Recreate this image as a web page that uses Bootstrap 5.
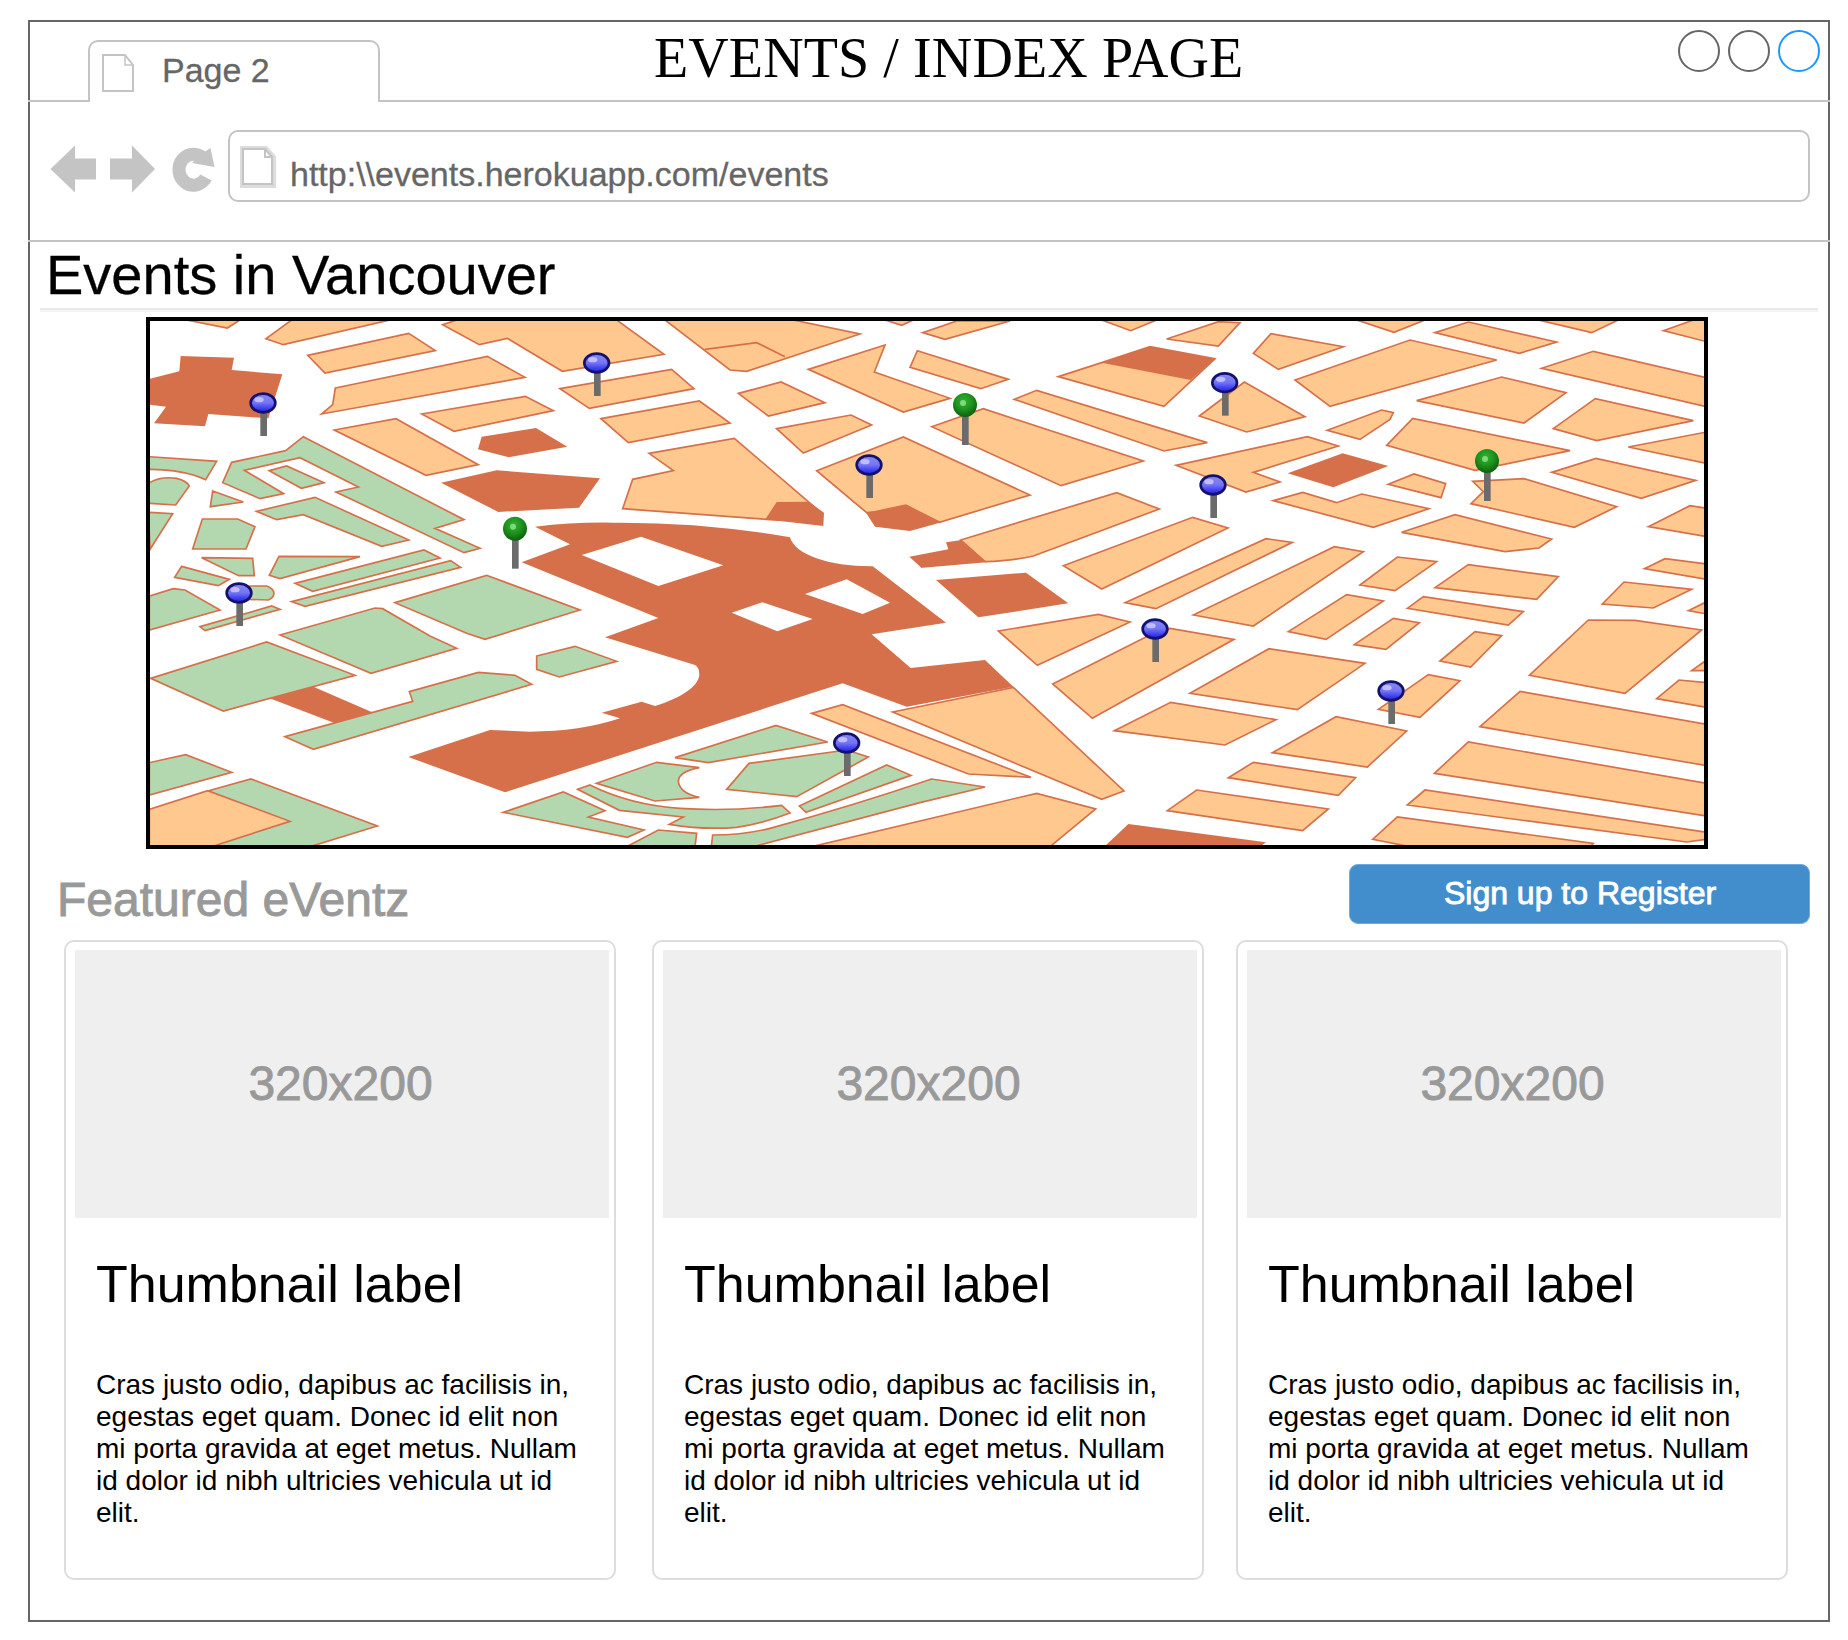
<!DOCTYPE html>
<html lang="en">
<head>
<meta charset="utf-8">
<meta name="viewport" content="width=device-width, initial-scale=1">
<title>Events / Index Page</title>
<link href="https://cdn.jsdelivr.net/npm/bootstrap@5.3.0/dist/css/bootstrap.min.css" rel="stylesheet">
<style>
body{font-family:"Liberation Sans",Arial,sans-serif;color:#000;background:#fff}
.browser-frame{width:1802px;height:1602px;margin:20px 0 0 28px;border:2px solid #666}
.tab-strip{height:80px;margin:0 -2px;border-bottom:2px solid #c4c4c4}
.page-tab{width:292px;height:62px;margin-left:60px;margin-bottom:-2px;border:2px solid #c4c4c4;border-bottom:0;border-radius:10px 10px 0 0;background:#fff;padding:12px 0 0 12px;font-size:34px;line-height:34px;color:#666;-webkit-text-stroke:.3px #666}
.page-tab span{margin:-1px 0 0 28px}
.page-title{font-family:"Liberation Serif","Times New Roman",serif;font-size:56px;line-height:64px;letter-spacing:.1px;margin:4px 0 0 274px;white-space:nowrap}
.window-dots{margin:8px 10px 0 0;gap:8px}
.window-dots i{width:42px;height:42px;border:2px solid #666;border-radius:50%}
.window-dots i:last-child{border-color:#1e96ff}
.tool-strip{height:140px;margin:0 -2px;border-bottom:2px solid #c4c4c4;padding:28px 20px 0 20px}
.address-bar{width:1582px;height:72px;border:2px solid #c4c4c4;border-radius:10px;padding:14px 0 0 10px;font-size:34px;line-height:40px;color:#666;-webkit-text-stroke:.3px #666}
.address-bar span{margin:8px 0 0 14px}
.city-heading{font-size:56px;line-height:66px;margin:0;padding-left:16px;font-weight:400;-webkit-text-stroke:.3px #000}
.heading-rule{height:4px;margin:0 10px;border-top:2px solid #e8e8e8;background:#f4f4f4}
.city-map{width:1562px;height:532px;margin:5px 0 0 116px;border:4px solid #000}
.city-map svg{display:block}
.featured-row{height:60px;margin:15px 18px 0 27px}
.featured-title{font-size:48px;line-height:48px;margin:12px 0 0;font-weight:400;color:#999;-webkit-text-stroke:.9px #999}
.btn-register{width:461px;height:60px;font-size:32px;line-height:54px;padding:0 0 2px 1px;color:#fff;background:#428ecd;border:1px solid #6faade;border-radius:9px;-webkit-text-stroke:.9px #fff}
.thumb-row{margin:16px 0 0 34px}
.thumb-card{width:552px;height:640px;border:2px solid #ddd;border-radius:10px;padding:8px 5px 0 9px}
.thumb-image{height:268px;padding-right:3px;background:#efefef;color:#999;font-size:48px;-webkit-text-stroke:.9px #999}
.thumb-label{font-size:52px;line-height:60px;font-weight:400;margin:36px 0 0 21px}
.thumb-text{font-size:28px;line-height:32px;margin:55px 0 0 21px;white-space:nowrap}
.o{fill:#ffc88f;stroke:#d6704a;stroke-width:5}
.g{fill:#b3d8b0;stroke:#d6704a;stroke-width:5}
.r{fill:#d6704a}
</style>
<script src="https://cdn.jsdelivr.net/npm/bootstrap@5.3.0/dist/js/bootstrap.bundle.min.js"></script>
</head>
<body>
<main class="browser-frame">
  <div class="tab-strip d-flex align-items-start">
    <div class="page-tab d-flex align-items-start align-self-end">
      <svg width="32" height="38" viewBox="0 0 32 38" fill="none" stroke="#c4c4c4" stroke-width="2"><path d="M1 1H23L31 11V37H1Z"/><path d="M23 1V11H31" stroke-width="1.5"/></svg>
      <span>Page 2</span>
    </div>
    <div class="page-title">EVENTS / INDEX PAGE</div>
    <div class="window-dots d-flex ms-auto"><i></i><i></i><i></i></div>
  </div>
  <div class="tool-strip d-flex align-items-start">
    <svg width="180" height="72" viewBox="48 130 180 72" fill="#c4c4c4"><path d="M50.500 169 75 145.500V158.500H96V179.500H75V192.500Z"/><path d="M155 169 132 145.500V158.500H110V179.500H132V192.500Z"/><path d="M206 177.500A14.500 15.500 0 1 1 204 159" fill="none" stroke="#c4c4c4" stroke-width="13"/><path d="M210.500 148 214.500 167 192 163 200 155Z"/></svg>
    <div class="address-bar d-flex align-items-start">
      <svg width="36" height="42" viewBox="0 0 36 42" fill="none"><path d="M2 2H26L34 11V40H2Z" stroke="#dcdcdc" stroke-width="4"/><path d="M3 3H25L32 11V38H3Z" stroke="#c4c4c4" stroke-width="2"/><path d="M25 3V11H32" stroke="#c4c4c4" stroke-width="2"/></svg>
      <span>http:\\events.herokuapp.com/events</span>
    </div>
  </div>
  <h1 class="city-heading">Events in Vancouver</h1>
  <div class="heading-rule"></div>
  <div class="city-map">
    <svg width="1554" height="524" viewBox="30 33 4662 1572">
      <defs>
        <linearGradient id="blueHead" x1="0" y1="0" x2="0" y2="1"><stop offset="0" stop-color="#8a8aee"/><stop offset=".5" stop-color="#7474f4"/><stop offset=".75" stop-color="#4444f4"/><stop offset="1" stop-color="#2222d0"/></linearGradient>
        <radialGradient id="greenHead" cx=".45" cy=".35" r=".65"><stop offset="0" stop-color="#2fb52f"/><stop offset=".5" stop-color="#1f951f"/><stop offset="1" stop-color="#0d600d"/></radialGradient>
        <g id="bluePin"><path d="M2 20V99" stroke="#6b6b6b" stroke-width="20"/><ellipse rx="37" ry="28" fill="url(#blueHead)" stroke="#12126e" stroke-width="8"/><ellipse cx="-12" cy="-10" rx="14" ry="8" fill="#d2ccff" opacity=".8"/></g>
        <g id="greenPin"><path d="M1 20V120" stroke="#6b6b6b" stroke-width="20"/><circle r="36" fill="url(#greenHead)"/><circle cx="-6" cy="-6" r="9" fill="#8ee08e" opacity=".85"/></g>
      </defs>

      <!-- north-west blocks -->
      <g>
        <path class="o" d="M140 30 262 54 300 30ZM378 86 455 30H750L430 104ZM503 136 806 70 886 122 555 189ZM586 234 1042 139 1155 202 545 312 578 284ZM845 312 1156 259 1240 302 942 364ZM583 360 768 326 1015 464 858 496ZM908 44 1018 104 1102 85 1267 184 1572 133 1430 30H950Z"/>
        <path class="r" d="M122 138 282 143 275 180 427 193 385 325 205 312 195 349 42 340 78 290 28 284V207L118 184ZM1025 380 1188 354 1282 410 1106 442 1014 418ZM903 518 1070 481 1380 505 1317 593 1075 606Z"/>
        <path class="g" d="M25 440 230 454 197 509Q130 478 25 478ZM25 520Q60 498 110 505 140 512 148 528L107 585 25 580ZM25 607 98 611 30 718ZM218 543 310 576 211 590ZM187 627H293L345 650 318 717H158ZM248 518 275 457 437 422 490 380 972 629 885 655 1020 715 972 728 588 546 655 531 480 443 313 481 431 551 360 566ZM388 482 440 468 552 518 484 535ZM350 604 525 562 806 690 725 709 490 614 410 629ZM185 743 338 745 343 797H296ZM417 739 660 740 420 806 388 796ZM125 769 268 808 235 827 104 802ZM465 820 852 720 900 744 518 844ZM455 875 932 752 962 772 495 889ZM765 878 1040 796 1320 900 1035 988 980 970Z"/>
      </g>
      <!-- south-west blocks -->
      <g transform="translate(0 810)">
        <path class="r" d="M385 353 515 318 700 398 585 430Z"/>
        <path class="g" d="M28 48 100 26 135 30 240 90 28 150ZM330 18H380C408 28 408 50 385 60L325 58ZM180 140 395 78 420 88 195 152ZM420 165 705 84 728 86 870 168 950 205 693 280ZM32 295 380 186 645 286 250 393ZM435 470 818 364 808 335 1015 277 1125 286 1175 313 520 508ZM28 548 137 524 275 577 28 645ZM203 633 333 597 712 738 510 800H200Z"/>
        <path class="o" d="M28 688 203 632 450 724 215 800H28Z"/>
      </g>
      <!-- central blocks -->
      <g transform="translate(1170 0)">
        <path class="r" fill-rule="evenodd" d="M15 650Q130 636 250 638 520 636 780 682C795 735 900 770 1028 769L1248 938 1025 973 1142 1074 1365 1050 1450 1130 1130 1190 938 1120-75 1447-365 1341-120 1260 0 1265Q150 1265 270 1225L215 1208 335 1175 375 1188C450 1165 505 1130 508 1095Q508 1072 495 1065L225 982 385 924-25 757 120 703ZM155 735 385 828 580 766 333 680ZM605 908 697 877 848 927 742 964ZM825 852 950 808 1080 878 998 912Z"/>
        <path class="o" d="M90 236 425 178 492 236 178 295ZM213 326 508 273 600 339 295 398ZM357 430 613 385 870 605 835 635 708 628 278 596 308 508 430 482ZM405 30 600 180 650 184 990 72 790 30ZM625 250 753 216 885 278 715 318ZM740 356 963 315 1025 345 820 429ZM835 178 1065 105 1033 186 1260 265 1120 306ZM1140 172 1162 122 1435 208 1352 236ZM1065 30 1115 46 1150 30ZM860 482 1120 381 1500 555 1228 637 1128 600 1010 608Z"/>
        <path class="o" d="M525 118 680 98 765 140"/>
        <path class="r" d="M740 576 835 575 882 608 880 648 706 628ZM1008 608 1128 583 1235 637 1140 663 1035 650Z"/>
      </g>
      <g transform="translate(1170 810)">
        <path class="g" d="M20 228 135 199 260 244 88 291 20 268ZM435 533 738 436 893 486 535 548ZM200 610 380 547 508 563Q445 575 445 605 450 640 508 652L375 663ZM590 628 657 550 950 510 1015 531 800 650ZM808 678 1070 555 1143 586 828 697ZM143 628 180 615Q300 675 450 685 600 695 755 676L780 699Q700 730 620 742 520 750 418 733L460 711 268 691ZM-80 697 100 636 225 692 175 711 342 750 292 772ZM290 800 385 750 500 760 495 800ZM544 800 548 765Q640 765 720 745 960 680 1205 597L1365 621 1170 668 670 800Z"/>
      </g>
      <!-- north-east blocks -->
      <g transform="translate(2340 0)">
        <path class="o" d="M8 68 75 88 270 33H110ZM122 690 590 548 718 597 340 738Q280 752 195 755ZM35 350 190 296 670 453 423 527ZM283 268 350 241 862 398 732 423ZM415 200 545 158 690 110 885 146 732 289ZM545 30 632 62 710 30ZM740 87 895 35 960 38 895 108ZM1000 130 1053 71 1270 110 1075 178ZM838 318 973 216 1155 320 980 366ZM768 466 1162 380 1255 408 1000 487 1080 516 978 546ZM1060 572 1148 547 1250 578 1325 552 1527 596 1360 652ZM430 767 818 622 924 654 545 837ZM615 878 1038 686 1117 697 708 896ZM820 915 1243 710 1330 725 1000 948ZM1125 210 1470 90 1730 150 1230 289Z"/>
        <path class="r" d="M78 697 125 690 200 757 0 774H5L-32 740 85 718ZM48 810 318 788 445 880 175 922ZM545 158 690 110 885 146 812 210ZM1103 490 1268 430 1405 468 1240 532Z"/>
      </g>
      <g transform="translate(3510 0)">
        <path class="o" d="M140 30 252 67 345 30ZM375 68 475 36 740 96 628 130ZM685 30 845 68 925 30ZM1060 62 1150 30H1190V95ZM695 175 850 124 1190 203V290ZM320 272 575 201 768 248 642 339ZM730 356 856 266 1150 332 860 392ZM955 411 1190 366V460ZM52 361 215 300 250 308 240 328 150 388ZM230 406 308 325 780 422 495 481ZM235 523 312 492 407 521 393 563ZM488 514 642 506 920 590 793 652 483 581 520 545ZM725 487 858 445 1157 511 994 565ZM275 667 435 614 725 687 687 714 585 725ZM1015 650 1140 587 1190 595V680ZM1003 776 1065 746 1190 762V808ZM150 825 262 741 380 755 255 842ZM375 833 475 764 745 800 680 868ZM877 882 942 816 1145 838 1030 894Z"/>
      </g>
      <!-- south-east blocks -->
      <g transform="translate(2340 810)">
        <path class="o" d="M742 692 830 630 1225 687 1148 752ZM810 340 1047 206 1335 250 1132 389ZM583 452 752 367 1068 419 915 495ZM235 153 535 103 630 126 352 256ZM398 312 700 160 750 145 942 178 517 415ZM-82 396 280 322 612 633 545 658ZM-325 400-232 374 333 592 145 582ZM-325 800 350 640 527 687 390 800Z"/>
        <path class="r" d="M553 800 625 732 1038 787 1020 800Z"/>
      </g>
      <g transform="translate(3510 810)">
        <path class="o" d="M1135 92 1190 65V102ZM-65 155 110 44 220 63 48 178ZM292 85 340 50 640 95 595 135ZM133 194 250 115 328 128 228 208ZM390 243 495 155 575 167 482 261ZM658 286 835 120 975 121 1175 150 945 340ZM1145 272 1190 240V272ZM1040 356 1107 300 1190 308V382ZM205 388 355 284 450 302 330 412ZM510 440 630 334 1190 433V557ZM373 580 475 486 1190 610V708ZM292 675 345 630 1190 757V778L1130 786ZM188 778 262 711 850 790 840 802 300 800ZM-113 518 78 410 290 453 172 561ZM-245 593-170 547 137 593 85 646Z"/>
      </g>

      <use href="#bluePin" x="369" y="279"/>
      <use href="#bluePin" x="297" y="849"/>
      <use href="#bluePin" x="1370" y="159"/>
      <use href="#bluePin" x="2187" y="465"/>
      <use href="#bluePin" x="2120" y="1299"/>
      <use href="#bluePin" x="3254" y="218"/>
      <use href="#bluePin" x="3219" y="525"/>
      <use href="#bluePin" x="3045" y="957"/>
      <use href="#bluePin" x="3753" y="1143"/>
      <use href="#greenPin" x="1125" y="656"/>
      <use href="#greenPin" x="2475" y="285"/>
      <use href="#greenPin" x="4041" y="453"/>
    </svg>
  </div>
  <div class="featured-row d-flex justify-content-between align-items-start">
    <h2 class="featured-title">Featured eVentz</h2>
    <button type="button" class="btn btn-primary btn-register">Sign up to Register</button>
  </div>
  <div class="thumb-row d-flex">
    <div class="thumb-card">
      <div class="thumb-image d-flex align-items-center justify-content-center">320x200</div>
      <h3 class="thumb-label">Thumbnail label</h3>
      <p class="thumb-text">Cras justo odio, dapibus ac facilisis in,<br>egestas eget quam. Donec id elit non<br>mi porta gravida at eget metus. Nullam<br>id dolor id nibh ultricies vehicula ut id<br>elit.</p>
    </div>
    <div class="thumb-card" style="margin:0 32px 0 36px">
      <div class="thumb-image d-flex align-items-center justify-content-center">320x200</div>
      <h3 class="thumb-label">Thumbnail label</h3>
      <p class="thumb-text">Cras justo odio, dapibus ac facilisis in,<br>egestas eget quam. Donec id elit non<br>mi porta gravida at eget metus. Nullam<br>id dolor id nibh ultricies vehicula ut id<br>elit.</p>
    </div>
    <div class="thumb-card">
      <div class="thumb-image d-flex align-items-center justify-content-center">320x200</div>
      <h3 class="thumb-label">Thumbnail label</h3>
      <p class="thumb-text">Cras justo odio, dapibus ac facilisis in,<br>egestas eget quam. Donec id elit non<br>mi porta gravida at eget metus. Nullam<br>id dolor id nibh ultricies vehicula ut id<br>elit.</p>
    </div>
  </div>
</main>
</body>
</html>
